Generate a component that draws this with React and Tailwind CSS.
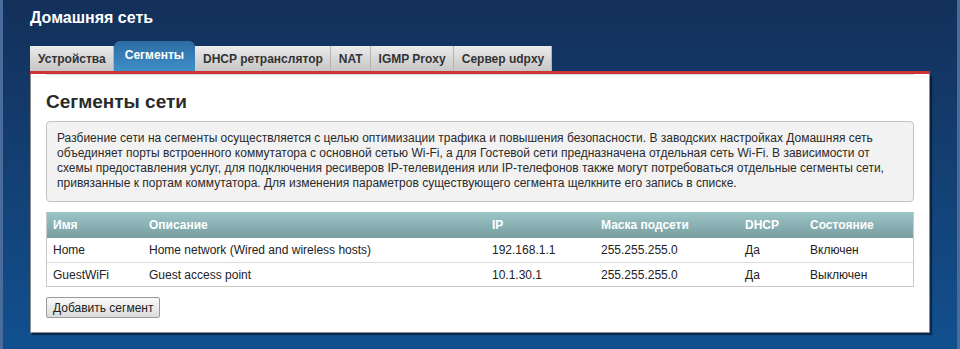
const tabs = ['Устройства', 'Сегменты', 'DHCP ретранслятор', 'NAT', 'IGMP Proxy', 'Сервер udpxy'];

const rows = [
  { name: 'Home', desc: 'Home network (Wired and wireless hosts)', ip: '192.168.1.1', mask: '255.255.255.0', dhcp: 'Да', state: 'Включен' },
  { name: 'GuestWiFi', desc: 'Guest access point', ip: '10.1.30.1', mask: '255.255.255.0', dhcp: 'Да', state: 'Выключен' },
];

const cols = 'grid grid-cols-[96px_343px_109px_144px_65px_1fr]';

export default function App() {
  return (
    <div className="min-h-[349px] w-full bg-gradient-to-b from-[#13305a] to-[#11508f] border-x-[3px] border-[#4a6c9c] pl-[27px] font-['Liberation_Sans',Arial,sans-serif] text-[12px] text-[#222]">
      <div className="pt-[8px] h-[20px] box-content leading-[20px] text-[16px] font-bold text-white">Домашняя сеть</div>

      <div className="w-[900px] mt-[13px]">
        <div className="flex items-end h-[30px]">
          {tabs.map((t) =>
            t === 'Сегменты' ? (
              <div key={t} className="h-[30px] px-[11px] pt-[7px] rounded-t-[6px] bg-gradient-to-b from-[#2e6ca4] to-[#3f8fc8] text-white font-bold leading-[14px]">{t}</div>
            ) : (
              <div key={t} className="h-[25px] pl-[8px] pr-[7px] pt-[6px] bg-gradient-to-b from-[#ebebeb] to-[#c6c6c6] border-r border-[#b4b4b4] text-[#333] font-bold leading-[14px]">{t}</div>
            )
          )}
        </div>
        <div className="h-[3px] bg-[#cf3434]" />

        <div className="bg-white border border-t-0 border-[#8c8c8c] shadow-[2px_2px_1px_rgba(0,0,0,0.45)] px-[15px] pb-[14px]">
          <div className="border-t border-[#d8d8d8]" />
          <h1 className="pt-[16px] text-[19px] leading-[22px] font-bold text-[#2a2a2a]">Сегменты сети</h1>

          <div className="mt-[8px] bg-[#f2f2f2] border border-[#c2c2c2] rounded-[4px] px-[10px] pt-[9px] pb-[10px] leading-[15px] text-[#2a2a2a]">
            Разбиение сети на сегменты осуществляется с целью оптимизации трафика и повышения безопасности. В заводских настройках Домашняя сеть<br />
            объединяет порты встроенного коммутатора с основной сетью Wi-Fi, а для Гостевой сети предназначена отдельная сеть Wi-Fi. В зависимости от<br />
            схемы предоставления услуг, для подключения ресиверов IP-телевидения или IP-телефонов также могут потребоваться отдельные сегменты сети,<br />
            привязанные к портам коммутатора. Для изменения параметров существующего сегмента щелкните его запись в списке.
          </div>

          <div className="mt-[10px] border-x border-b border-[#cacaca]">
            <div className={`${cols} h-[26px] items-center bg-gradient-to-b from-[#9dc6c9] to-[#779d9f] text-white font-bold`}>
              <div className="px-[6px]">Имя</div>
              <div className="px-[6px]">Описание</div>
              <div className="px-[6px]">IP</div>
              <div className="px-[6px]">Маска подсети</div>
              <div className="px-[6px]">DHCP</div>
              <div className="px-[6px]">Состояние</div>
            </div>
            {rows.map((r, i) => (
              <div key={r.name} className={`${cols} h-[24px] items-center ${i > 0 ? 'border-t border-[#dddddd]' : ''}`}>
                <div className="px-[6px]">{r.name}</div>
                <div className="px-[6px]">{r.desc}</div>
                <div className="px-[6px]">{r.ip}</div>
                <div className="px-[6px]">{r.mask}</div>
                <div className="px-[6px]">{r.dhcp}</div>
                <div className="px-[6px]">{r.state}</div>
              </div>
            ))}
          </div>

          <button className="mt-[10px] h-[21px] px-[6px] border border-[#9a9a9a] rounded-[2px] bg-gradient-to-b from-[#fafafa] to-[#dcdcdc] text-[#222] leading-[18px]">
            Добавить сегмент
          </button>
        </div>
      </div>
    </div>
  );
}
